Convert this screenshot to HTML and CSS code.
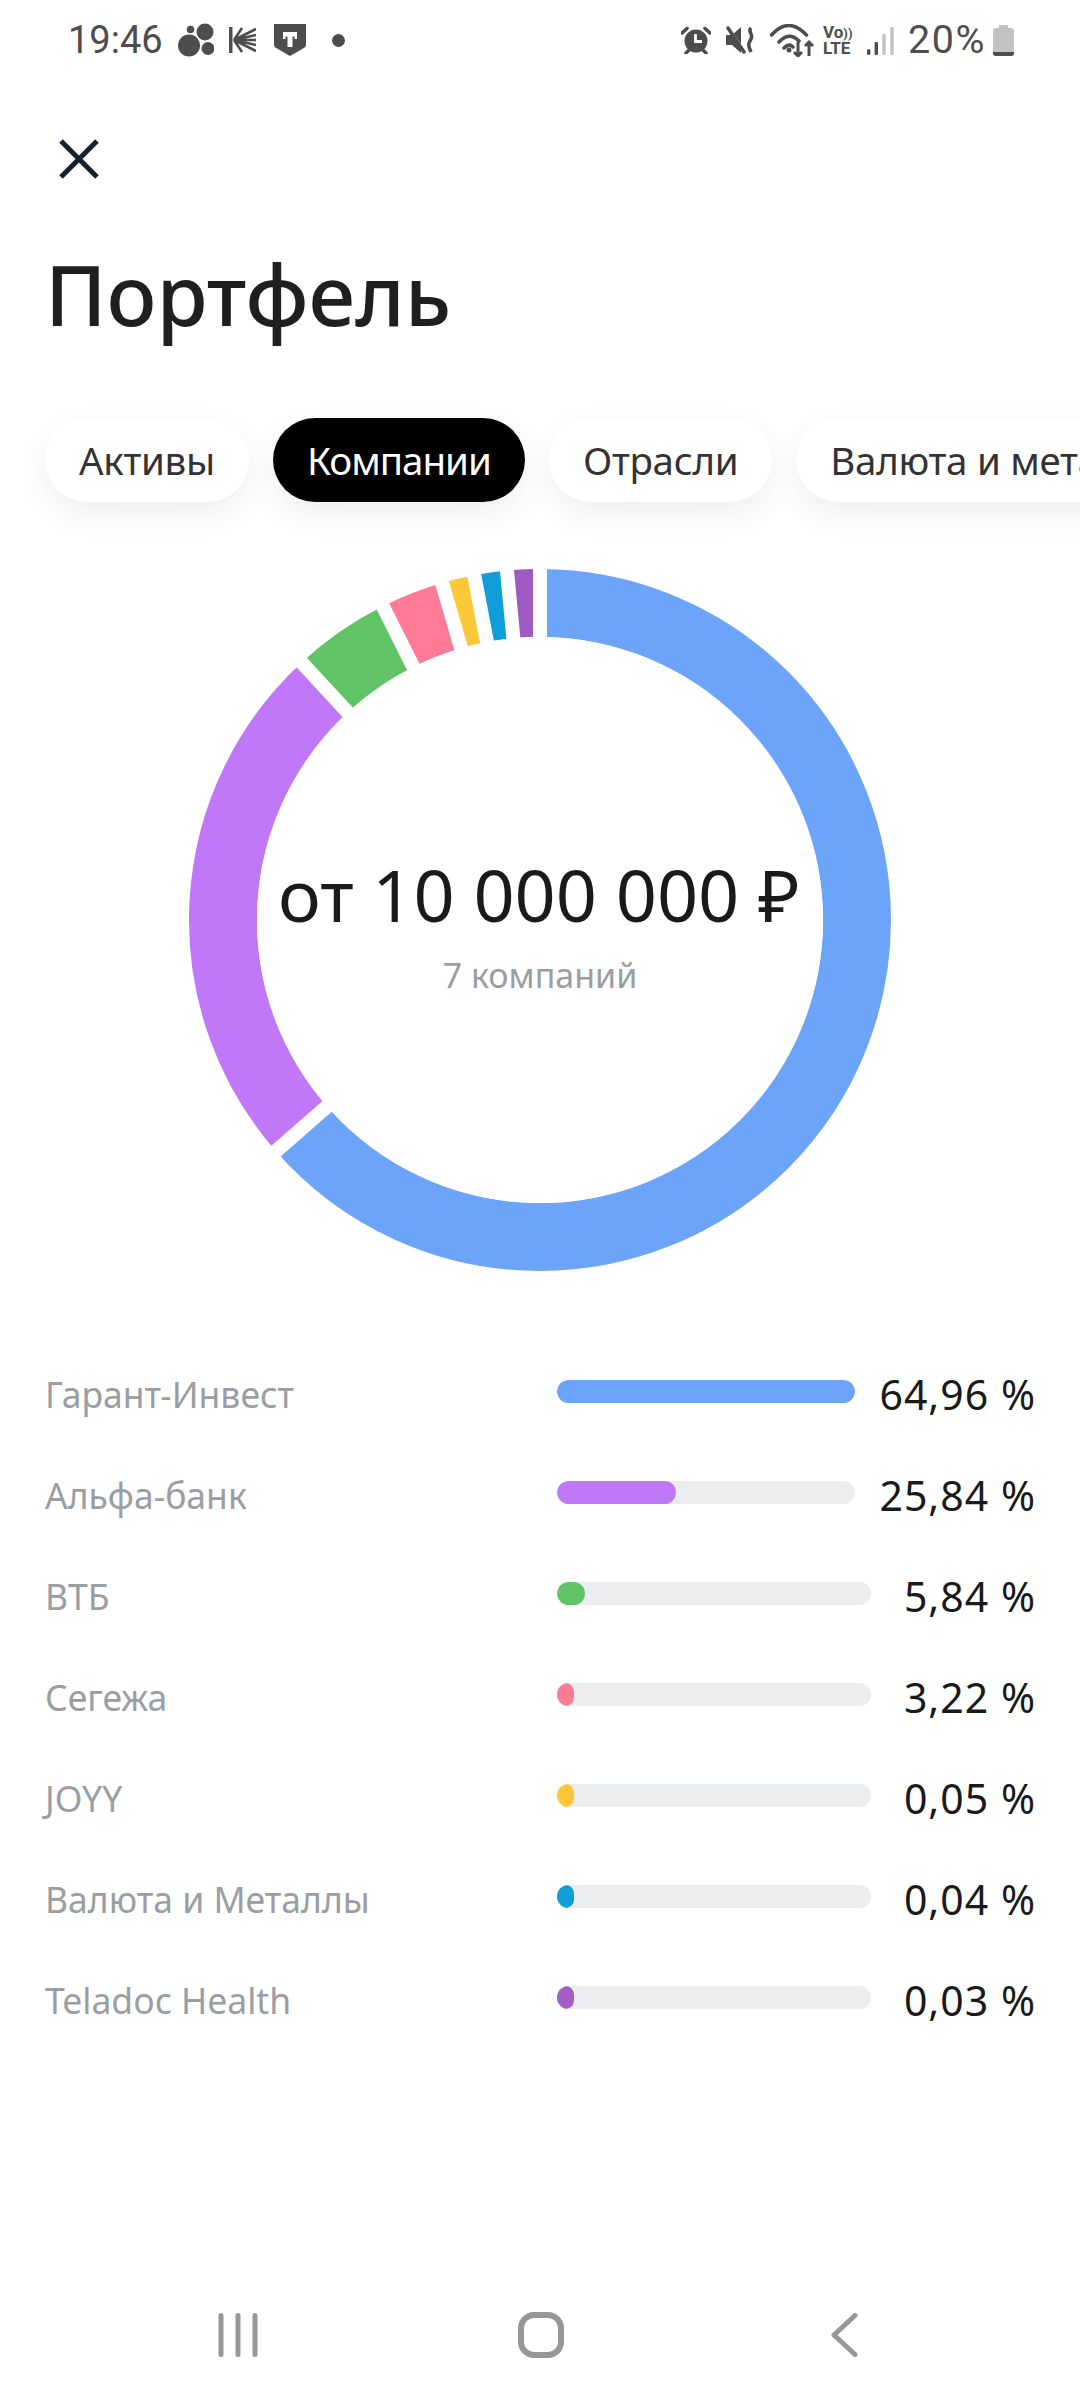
FILE: index.html
```html
<!DOCTYPE html>
<html lang="ru">
<head>
<meta charset="utf-8">
<title>Портфель</title>
<link rel="stylesheet" href="styles.css">
</head>
<body>
<div class="screen">
  <header class="status">
    <div class="status-left">
      <span class="status-text">19:46</span>
      <svg class="ic ic-bubbles" viewBox="0 0 36 34"><circle cx="11" cy="22.500" r="11"/><circle cx="27" cy="9" r="8.500"/><circle cx="30" cy="25.500" r="6.500"/><circle cx="12.500" cy="6.500" r="3.800"/></svg>
      <svg class="ic ic-k" viewBox="0 0 27 26"><path d="M0 0h3.500v26H0z"/><path class="thin" d="M5 13 27 2M5 13l22-5M5 13h22M5 13l22 5M5 13l22 11M5 13 13 1M5 13l8 12"/></svg>
      <svg class="ic ic-shield" viewBox="0 0 32 32"><path d="M0 0h32v21q0 2-3 3.500L16 32 3 24.500Q0 23 0 21z"/><path class="cut" d="M9 8h14v7h-2.500v-2.500h-2V23h-5V12.500h-2V15H9z"/></svg>
      <span class="status-dot"></span>
    </div>
    <div class="status-right">
      <svg class="ic ic-alarm" viewBox="0 0 30 28"><circle cx="15" cy="15" r="11.500"/><path class="line" d="M1 7 6 2.500M29 7l-5-4.500M5 27l3-3M25 27l-3-3"/><path class="cutline" d="M14.500 8v7.500H21"/></svg>
      <svg class="ic ic-mute" viewBox="0 0 30 28"><path d="M0 9h6l9-8v26l-9-8H0z"/><path class="cutline" d="M1 0l19 28"/><path class="line" d="M2 2l16 24"/><path class="wave" d="M25 2c-4 4 3 6 0 11s-3 6 0 13"/></svg>
      <svg class="ic ic-wifi" viewBox="0 0 45 33"><path class="line" d="M1.500 11Q18.500-8 36.500 11M9 18Q19 7 29 17M14 24q5-5 9-1"/><circle cx="19" cy="26" r="2.500"/><path class="line2" d="M28 18v14M24 28l4 4 4-4M39 32V18M35 22l4-4 4 4"/></svg>
      <span class="volte"><span>Vo<i>))</i></span><span>LTE</span></span>
      <svg class="ic ic-signal" viewBox="0 0 27 29"><rect x="0" y="23" width="3.400" height="6" rx="1.500"/><rect x="7.600" y="16" width="3.400" height="13" rx="1"/><rect class="dim" x="15.300" y="8" width="3.400" height="21" rx="1"/><rect class="dim" x="23.300" y="1" width="3.400" height="28" rx="1"/></svg>
      <span class="status-text status-pct">20%</span>
      <svg class="ic ic-battery" viewBox="0 0 21 31"><path class="dim" d="M6 0h9v3h3a3 3 0 0 1 3 3v22a3 3 0 0 1-3 3H3a3 3 0 0 1-3-3V6a3 3 0 0 1 3-3h3z"/><path d="M0 27h21v1a3 3 0 0 1-3 3H3a3 3 0 0 1-3-3z"/></svg>
    </div>
  </header>

  <svg class="close" viewBox="0 0 40 40"><path d="M2 2l36 36M38 2 2 38"/></svg>

  <h1 class="title">Портфель</h1>

  <nav class="chips">
    <span class="chip">Активы</span>
    <span class="chip chip-active">Компании</span>
    <span class="chip">Отрасли</span>
    <span class="chip">Валюта и металлы</span>
  </nav>

  <section class="donut">
    <svg class="donut-svg" viewBox="0 0 700 700">
      <circle class="seg seg-blue" cx="350" cy="350" r="317" pathLength="360" stroke-dasharray="228.800 131.200" transform="rotate(-90 350 350)"/>
      <circle class="seg seg-violet" cx="350" cy="350" r="317" pathLength="360" stroke-dasharray="88.400 271.600" transform="rotate(138.800 350 350)"/>
      <circle class="seg seg-green" cx="350" cy="350" r="317" pathLength="360" stroke-dasharray="16.200 343.800" transform="rotate(227.200 350 350)"/>
      <circle class="seg seg-pink" cx="350" cy="350" r="317" pathLength="360" stroke-dasharray="10.400 349.600" transform="rotate(243.400 350 350)"/>
      <circle class="seg seg-yellow" cx="350" cy="350" r="317" pathLength="360" stroke-dasharray="5.400 354.600" transform="rotate(253.800 350 350)"/>
      <circle class="seg seg-cyan" cx="350" cy="350" r="317" pathLength="360" stroke-dasharray="5.400 354.600" transform="rotate(259.200 350 350)"/>
      <circle class="seg seg-purple" cx="350" cy="350" r="317" pathLength="360" stroke-dasharray="5.400 354.600" transform="rotate(264.600 350 350)"/>
      <g class="gaps">
        <line x1="350" y1="350" x2="350" y2="-10" transform="rotate(0 350 350)"/>
        <line x1="350" y1="350" x2="350" y2="-10" transform="rotate(228.800 350 350)"/>
        <line x1="350" y1="350" x2="350" y2="-10" transform="rotate(317.200 350 350)"/>
        <line x1="350" y1="350" x2="350" y2="-10" transform="rotate(333.400 350 350)"/>
        <line x1="350" y1="350" x2="350" y2="-10" transform="rotate(343.800 350 350)"/>
        <line x1="350" y1="350" x2="350" y2="-10" transform="rotate(349.200 350 350)"/>
        <line x1="350" y1="350" x2="350" y2="-10" transform="rotate(354.600 350 350)"/>
      </g>
      <circle class="hole" cx="350" cy="350" r="283"/>
    </svg>
    <div class="donut-center">
      <div class="donut-sum">от 10 000 000 ₽</div>
      <div class="donut-sub">7 компаний</div>
    </div>
  </section>

  <section class="rows">
    <div class="row"><span class="row-name">Гарант-Инвест</span><span class="bar"><span class="fill seg-blue-bg" style="width:100%"></span></span><span class="row-val">64,96 %</span></div>
    <div class="row"><span class="row-name">Альфа-банк</span><span class="bar"><span class="fill seg-violet-bg" style="width:39.8%"></span></span><span class="row-val">25,84 %</span></div>
    <div class="row row-short"><span class="row-name">ВТБ</span><span class="bar"><span class="fill seg-green-bg" style="width:9%"></span></span><span class="row-val">5,84 %</span></div>
    <div class="row row-short"><span class="row-name">Сегежа</span><span class="bar"><span class="fill seg-pink-bg" style="width:5%"></span></span><span class="row-val">3,22 %</span></div>
    <div class="row row-short"><span class="row-name">JOYY</span><span class="bar"><span class="fill seg-yellow-bg" style="width:0.1%"></span></span><span class="row-val">0,05 %</span></div>
    <div class="row row-short"><span class="row-name">Валюта и Металлы</span><span class="bar"><span class="fill seg-cyan-bg" style="width:0.1%"></span></span><span class="row-val">0,04 %</span></div>
    <div class="row row-short"><span class="row-name">Teladoc Health</span><span class="bar"><span class="fill seg-purple-bg" style="width:0.1%"></span></span><span class="row-val">0,03 %</span></div>
  </section>

  <footer class="navbar">
    <svg class="nav-ic nav-recent" viewBox="0 0 40 44"><path d="M3 2.500v39M20 2.500v39M37 2.500v39"/></svg>
    <svg class="nav-ic nav-home" viewBox="0 0 46 46"><rect x="3" y="3" width="40" height="40" rx="13"/></svg>
    <svg class="nav-ic nav-back" viewBox="0 0 27 44"><path d="M24 2.500 3 22l21 19.500"/></svg>
  </footer>
</div>
</body>
</html>
```
FILE: styles.css
```css
* { box-sizing: border-box; }
html, body { margin: 0; padding: 0; background: #fff; }
.screen {
  width: 1080px; height: 2400px; overflow: hidden;
  display: flex; flex-direction: column;
  font-family: "Noto Sans", "Open Sans", sans-serif;
  color: #1a1a1a; background: #fff;
}
.status { display: flex; justify-content: space-between; align-items: center; height: 80px; padding: 0 66px 0 68px; color: #4d4d4d; flex: none; }
.status-left, .status-right { display: flex; align-items: center; }
.status-text { font-size: 38px; line-height: 40px; color: #4d4d4d; font-family: "Roboto", sans-serif; }
.ic { display: block; fill: #4d4d4d; }
.ic .line { fill: none; stroke: #4d4d4d; stroke-width: 3.500; stroke-linecap: round; }
.ic .line2 { fill: none; stroke: #4d4d4d; stroke-width: 3; }
.ic .thin { fill: none; stroke: #4d4d4d; stroke-width: 2.600; }
.ic .cut { fill: #fff; }
.ic .cutline { fill: none; stroke: #fff; stroke-width: 2.800; }
.ic .wave { fill: none; stroke: #4d4d4d; stroke-width: 3.500; }
.ic .dim { fill: #c2c2c2; }
.ic-bubbles { width: 36px; height: 34px; margin-left: 15px; }
.ic-k { width: 27px; height: 26px; margin-left: 15px; }
.ic-shield { width: 32px; height: 32px; margin-left: 18px; }
.status-dot { width: 13px; height: 13px; border-radius: 50%; background: #4d4d4d; margin-left: 26px; }
.ic-alarm { width: 30px; height: 28px; }
.ic-mute { width: 30px; height: 28px; margin-left: 15px; }
.ic-wifi { width: 45px; height: 33px; margin-left: 14px; }
.volte { display: flex; flex-direction: column; margin-left: 8px; width: 32px; font-family: "Roboto", sans-serif; font-weight: 700; font-size: 17px; line-height: 15px; color: #4d4d4d; white-space: nowrap; }
.volte i { font-style: normal; font-size: 13px; }
.ic-signal { width: 27px; height: 29px; margin-left: 12px; }
.status-pct { margin-left: 14px; font-size: 39.500px; letter-spacing: 1.500px; width: 78px; white-space: nowrap; }
.ic-battery { width: 21px; height: 31px; margin-left: 7px; }

.close { display: block; width: 40px; height: 40px; margin: 59px 0 0 59px; flex: none; }
.close path { fill: none; stroke: #17202c; stroke-width: 5; }

.title { margin: 65px 0 0 45px; font-size: 83px; line-height: 100px; font-weight: 500; color: #1f1f1f; flex: none; }

.chips { display: flex; gap: 24px; margin-top: 74px; padding-left: 45px; flex: none; }
.chip { flex: none; display: flex; align-items: center; height: 84px; padding: 0 34px; border-radius: 42px; background: #fff; font-size: 38.500px; letter-spacing: -0.3px; color: #333; white-space: nowrap; box-shadow: 0 12px 32px rgba(0,0,0,.07); }
.chip-active { background: #000; color: #fff; letter-spacing: -1px; }

.donut { position: relative; width: 700px; height: 700px; margin: 68px 0 0 190px; flex: none; }
.donut-svg { display: block; width: 700px; height: 700px; overflow: visible; }
.seg { fill: none; stroke-width: 68; }
.seg-blue { stroke: #6ca4fa; }
.seg-violet { stroke: #c077f8; }
.seg-green { stroke: #60c466; }
.seg-pink { stroke: #fe7b95; }
.seg-yellow { stroke: #fdc837; }
.seg-cyan { stroke: #109ed9; }
.seg-purple { stroke: #9d5bc1; }
.gaps line { stroke: #fff; stroke-width: 14; }
.hole { fill: #fff; }
.donut-center { position: absolute; left: 0; right: 0; top: 282px; display: flex; flex-direction: column; align-items: center; }
.donut-sum { font-size: 72px; line-height: 84px; color: #1a1a1a; white-space: nowrap; margin-left: -2px; }
.donut-sub { font-size: 34px; line-height: 44px; color: #9a9ea3; margin-top: 17px; }

.rows { display: flex; flex-direction: column; gap: 45px; margin: 96px 45px 0 46px; flex: none; }
.row { display: flex; align-items: center; height: 56px; }
.row-name { flex: none; width: 511px; font-size: 35.500px; margin-left: -1px; color: #9a9ea3; white-space: nowrap; }
.bar { flex: 1; height: 23px; border-radius: 12px; background: #ebedef; margin-left: 1px; margin-right: 24px; overflow: hidden; display: block; position: relative; top: -3px; }
.row-short .bar { margin-right: 33px; }
.fill { display: block; height: 100%; min-width: 17px; border-radius: 12px; }
.row-val { flex: none; font-size: 41px; letter-spacing: 1px; margin-right: -1px; color: #1a1a1a; white-space: nowrap; }
.seg-blue-bg { background: #6ca4fa; }
.seg-violet-bg { background: #c077f8; }
.seg-green-bg { background: #60c466; }
.seg-pink-bg { background: #fe7b95; }
.seg-yellow-bg { background: #fdc837; }
.seg-cyan-bg { background: #109ed9; }
.seg-purple-bg { background: #a55cc3; }

.navbar { margin-top: auto; height: 88px; margin-bottom: 21px; display: flex; align-items: center; padding-left: 218px; flex: none; }
.nav-ic { display: block; flex: none; fill: none; stroke: #979797; stroke-linecap: round; stroke-linejoin: round; }
.nav-ic path, .nav-ic rect { fill: none; stroke: #979797; }
.nav-recent { width: 40px; height: 44px; stroke-width: 5; }
.nav-home { width: 46px; height: 46px; margin-left: 260px; stroke-width: 6; }
.nav-back { width: 27px; height: 44px; margin-left: 267px; stroke-width: 5; }
```
